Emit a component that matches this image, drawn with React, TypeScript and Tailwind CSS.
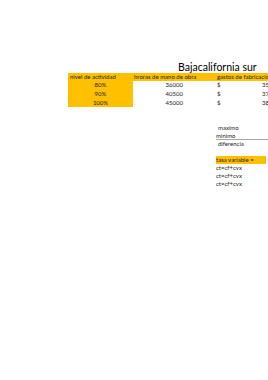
const ROWS = [
  { nivel: '80%', horas: '36000', gastos: '35' },
  { nivel: '90%', horas: '40500', gastos: '37' },
  { nivel: '100%', horas: '45000', gastos: '38' },
]

export default function App() {
  return (
    <div className="w-[268px] h-[380px] bg-white overflow-hidden pt-[61px] text-[#222] font-['Lato','Liberation_Sans',sans-serif]">
      <div className="h-[12px] pl-[178px] text-[10.5px] leading-[12px] whitespace-nowrap text-black">Bajacalifornia sur</div>

      {/* tabla de actividad */}
      <div className="ml-[68px] text-[6px] leading-[8px] whitespace-nowrap">
        <div className="flex h-[8px] items-center bg-[#ffc000]">
          <div className="w-[65px] shrink-0 pl-[2px]">nivel de actividad</div>
          <div className="w-[83px] shrink-0 pl-[1px]">hroras de mano de obra</div>
          <div className="shrink-0 pl-[1px]">gastos de fabricacion</div>
        </div>
        {ROWS.map((r) => (
          <div key={r.nivel} className="flex h-[8.67px] items-center">
            <div className="w-[65px] shrink-0 h-full flex items-center justify-center bg-[#ffc000]">{r.nivel}</div>
            <div className="w-[83px] shrink-0 pr-[33px] text-right">{r.horas}</div>
            <div className="shrink-0 flex pl-[1px]">
              <span className="w-[45px] shrink-0">$</span>
              <span>{r.gastos}</span>
            </div>
          </div>
        ))}
      </div>

      {/* rango */}
      <div className="mt-[17px] ml-[216px] text-[6px] leading-[8px] whitespace-nowrap">
        <div className="h-[8px] pl-[2px]">maximo</div>
        <div className="h-[8px] border-b border-[#a6a6a6]">minimo</div>
        <div className="h-[8px] pl-[2px]">diferencia</div>
        <div className="h-[8px]" />
        <div className="h-[8px] mr-[2px] bg-[#ffc000]">tasa variable =</div>
        <div className="h-[8px]">ct=cf+cvx</div>
        <div className="h-[8px]">ct=cf+cvx</div>
        <div className="h-[8px]">ct=cf+cvx</div>
      </div>
    </div>
  )
}
